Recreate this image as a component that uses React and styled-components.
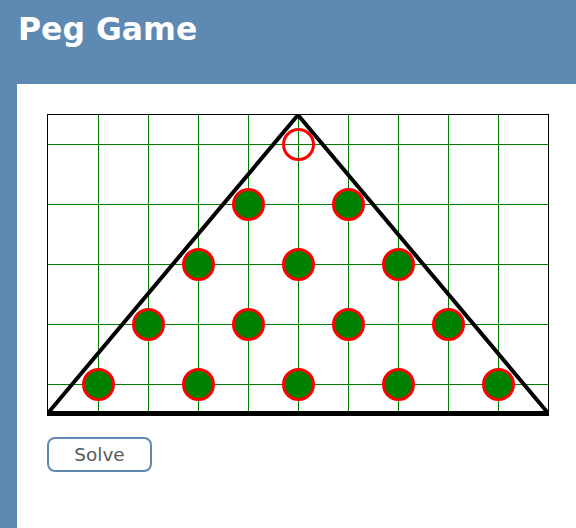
import React, { useState } from "react";
import styled, { createGlobalStyle } from "styled-components";

const GlobalStyle = createGlobalStyle`
  html, body {
    margin: 0;
    padding: 0;
    background: #5e89b3;
    font-family: "DejaVu Sans", Verdana, sans-serif;
  }
`;

const Page = styled.div`
  min-height: 528px;
  display: flex;
  flex-direction: column;
  background: #5e89b3;
`;

const Header = styled.header`
  height: 84px;
  box-sizing: border-box;
  padding: 10px 0 0 18px;
`;

const Title = styled.h1`
  margin: 0;
  font-size: 31.5px;
  line-height: 38px;
  font-weight: bold;
  color: #ffffff;
`;

const Panel = styled.main`
  flex: 1;
  margin-left: 17px;
  background: #ffffff;
  padding: 30px 0 0 30px;
  display: flex;
  flex-direction: column;
  align-items: flex-start;
  gap: 21px;
`;

const Board = styled.svg`
  display: block;
  border: 1px solid #000000;
  background: #ffffff;
`;

const Button = styled.button`
  width: 105px;
  height: 35px;
  border: 2px solid #5e89b3;
  border-radius: 8px;
  background: #ffffff;
  color: #5a5a5a;
  font-family: "DejaVu Sans", Verdana, sans-serif;
  font-size: 18.5px;
  cursor: pointer;
`;

const W = 500;
const H = 300;

// row r, position i -> board coords
const pegPos = (r, i) => ({
  x: 250 - r * 50 + i * 100,
  y: 29 + r * 60,
});

const initialPegs = () => {
  const pegs = [];
  for (let r = 0; r < 5; r++) {
    for (let i = 0; i <= r; i++) {
      pegs.push({ r, i, filled: !(r === 0 && i === 0) });
    }
  }
  return pegs;
};

const PegBoard = ({ pegs }) => {
  const vLines = [];
  for (let x = 50; x < W; x += 50) vLines.push(x);
  const hLines = [29, 89, 149, 209, 269];

  return (
    <Board width={W} height={H} viewBox={`0 0 ${W} ${H}`}>
      {vLines.map((x) => (
        <line key={"v" + x} x1={x + 0.5} y1={0} x2={x + 0.5} y2={H} stroke="#008000" strokeWidth="1" />
      ))}
      {hLines.map((y) => (
        <line key={"h" + y} x1={0} y1={y + 0.5} x2={W} y2={y + 0.5} stroke="#008000" strokeWidth="1" />
      ))}
      <polygon
        points={`250,0 0,298 500,298`}
        fill="none"
        stroke="#000000"
        strokeWidth="4"
        strokeLinejoin="miter"
      />
      {pegs.map((p) => {
        const { x, y } = pegPos(p.r, p.i);
        return (
          <circle
            key={`${p.r}-${p.i}`}
            cx={x + 0.5}
            cy={y + 0.5}
            r={15}
            fill={p.filled ? "#008000" : "none"}
            stroke="#ff0000"
            strokeWidth="3"
          />
        );
      })}
    </Board>
  );
};

export default function App() {
  const [pegs] = useState(initialPegs);

  return (
    <Page>
      <GlobalStyle />
      <Header>
        <Title>Peg Game</Title>
      </Header>
      <Panel>
        <PegBoard pegs={pegs} />
        <Button type="button">Solve</Button>
      </Panel>
    </Page>
  );
}
